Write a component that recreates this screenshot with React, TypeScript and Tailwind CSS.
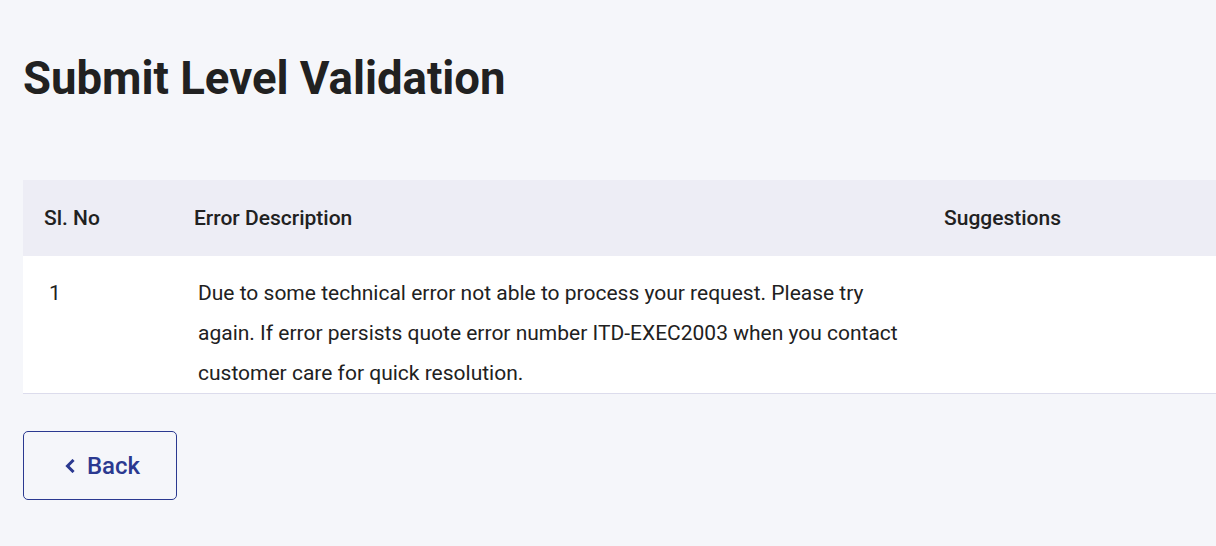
export default function App() {
  return (
    <div className="min-h-[546px] w-full overflow-hidden bg-[#f5f6fa] font-['Roboto',sans-serif] text-[#212121]">
      <div className="pl-[23px] pt-[51px]">
        <h1 className="text-[45.5px] font-bold leading-[56px]">Submit Level Validation</h1>

        <div className="mt-[73px] w-[1300px]">
          <div className="flex h-[76px] items-center bg-[#ededf5] pt-[2px] text-[21px] font-medium">
            <div className="w-[150px] pl-[21px]">Sl. No</div>
            <div className="w-[750px] pl-[21px]">Error Description</div>
            <div className="pl-[21px]">Suggestions</div>
          </div>
          <div className="flex border-b border-[#dcdcec] bg-white pt-[17px] text-[21px] leading-[40px]">
            <div className="w-[150px] pl-[26px]">1</div>
            <div className="w-[750px] pl-[25px] pr-[20px]">
              Due to some technical error not able to process your request. Please try again. If error persists quote error number ITD-EXEC2003 when you contact customer care for quick resolution.
            </div>
            <div className="pl-[21px]"></div>
          </div>
        </div>

        <button className="mt-[37px] flex h-[69px] w-[154px] items-center justify-center gap-[11px] rounded-[5px] border border-[#2b3990] pl-[4px] pt-[1px] text-[24px] font-medium text-[#2b3990]">
          <svg width="12" height="14" viewBox="0 0 12 14" fill="none">
            <path d="M8.5 2 L3.5 7 L8.5 12" stroke="#2b3990" strokeWidth="3" strokeLinecap="square" />
          </svg>
          Back
        </button>
      </div>
    </div>
  );
}
